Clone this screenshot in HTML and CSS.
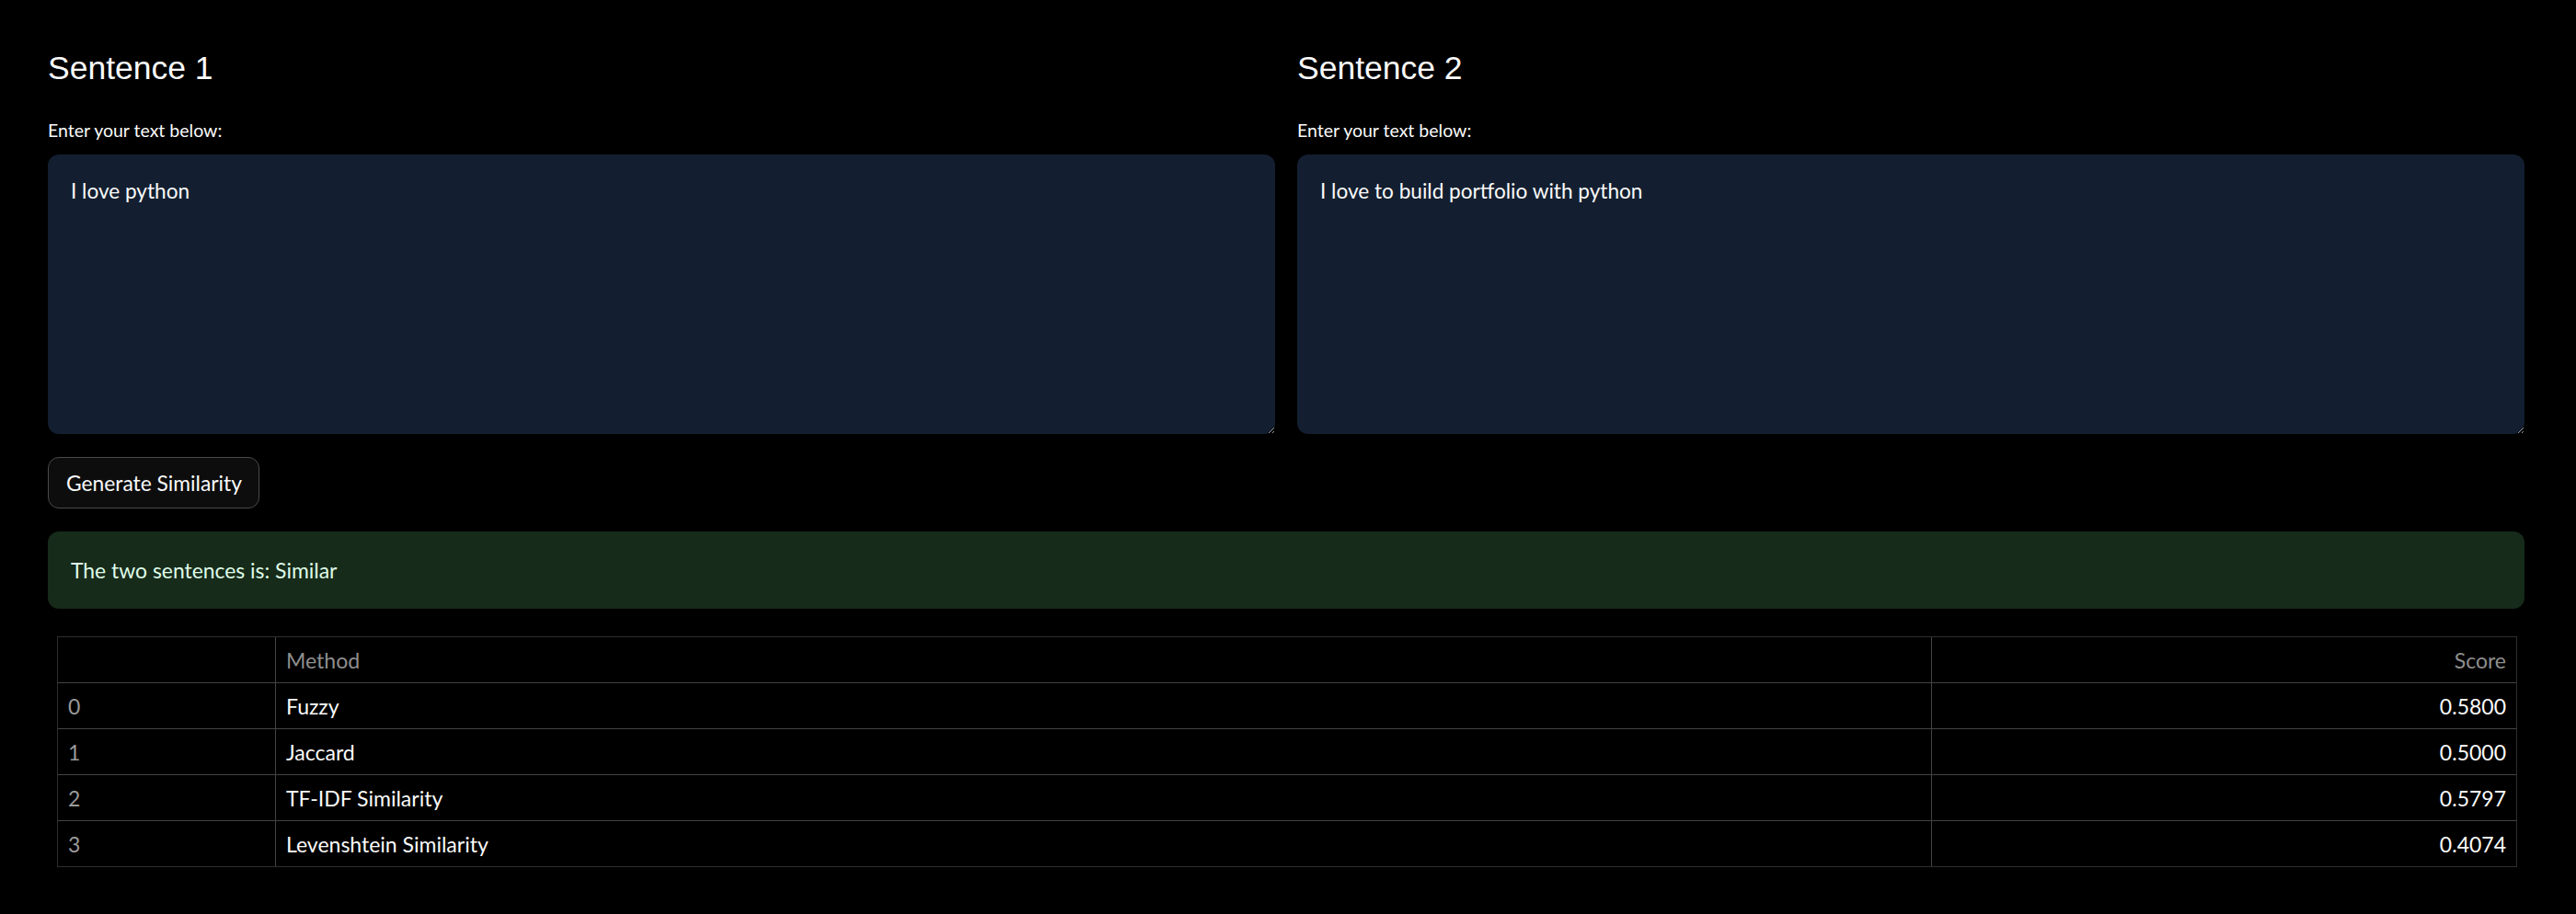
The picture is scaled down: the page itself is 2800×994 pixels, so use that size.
FILE: index.html
```html
<!DOCTYPE html>
<html lang="en">
<head>
<meta charset="utf-8">
<title>Sentence Similarity</title>
<link rel="stylesheet" href="styles.css">
</head>
<body>
<main class="main">
  <div class="columns">
    <section class="col">
      <h3 class="title">Sentence 1</h3>
      <label class="label" for="s1">Enter your text below:</label>
      <textarea id="s1" class="box">I love python</textarea>
    </section>
    <section class="col">
      <h3 class="title">Sentence 2</h3>
      <label class="label" for="s2">Enter your text below:</label>
      <textarea id="s2" class="box">I love to build portfolio with python</textarea>
    </section>
  </div>
  <button class="btn" type="button">Generate Similarity</button>
  <div class="alert">The two sentences is: Similar</div>
  <table class="grid">
    <thead>
      <tr><th class="idx"></th><th class="method">Method</th><th class="score">Score</th></tr>
    </thead>
    <tbody>
      <tr><td class="idx">0</td><td class="method">Fuzzy</td><td class="score">0.5800</td></tr>
      <tr><td class="idx">1</td><td class="method">Jaccard</td><td class="score">0.5000</td></tr>
      <tr><td class="idx">2</td><td class="method">TF-IDF Similarity</td><td class="score">0.5797</td></tr>
      <tr><td class="idx">3</td><td class="method">Levenshtein Similarity</td><td class="score">0.4074</td></tr>
    </tbody>
  </table>
</main>
</body>
</html>
```
FILE: styles.css
```css
body {
  margin: 0;
  background: #000;
  color: #fafafa;
  font-family: Lato, "Noto Sans", sans-serif;
}
.main {
  padding: 0 56px 0 52px;
}
.columns {
  display: grid;
  grid-template-columns: 1fr 1fr;
  gap: 24px;
}
.col {
  display: flex;
  flex-direction: column;
}
.title {
  margin: 53px 0 0;
  font-family: "Liberation Sans", Arial, sans-serif;
  font-weight: 400;
  font-size: 35.5px;
  line-height: 42px;
}
.label {
  display: block;
  margin: 34px 0 14px;
  font-size: 19.5px;
  line-height: 25px;
}
.box {
  box-sizing: border-box;
  height: 304px;
  width: 100%;
  margin: 0;
  padding: 22px 24px 0 25px;
  border: 0;
  border-radius: 12px;
  background: #131f30;
  color: #fafafa;
  font-family: Lato, sans-serif;
  font-size: 22.6px;
  line-height: 1.6;
  resize: vertical;
  outline: none;
}
.btn {
  display: flex;
  align-items: center;
  box-sizing: border-box;
  height: 56px;
  margin-top: 25px;
  padding: 0 18px 0 19px;
  border: 1px solid #4a4a4a;
  border-radius: 12px;
  background: #0d0d0d;
  color: #fafafa;
  font-family: Lato, sans-serif;
  font-size: 22.8px;
}
.alert {
  display: flex;
  align-items: center;
  box-sizing: border-box;
  height: 84px;
  margin-top: 25px;
  padding: 0 24px 0 25px;
  border-radius: 12px;
  background: #172b1a;
  color: #dffde9;
  font-size: 22.9px;
}
.grid {
  width: calc(100% - 18px);
  margin: 30px 8px 0 10px;
  border-collapse: separate;
  border-spacing: 0;
  border-top: 1px solid #2e2e2e;
  border-left: 1px solid #2e2e2e;
  font-size: 23px;
}
.grid th,
.grid td {
  box-sizing: border-box;
  height: 50px;
  padding: 0 11px;
  border-right: 1px solid #434343;
  border-bottom: 1px solid #434343;
  text-align: left;
  font-weight: 400;
}
.grid th {
  color: #8e8e8e;
}
.grid tr > :last-child {
  border-right-color: #2e2e2e;
}
.grid tbody tr:last-child td {
  border-bottom-color: #2e2e2e;
}
.grid .idx {
  width: 237px;
  color: #9a9a9a;
}
.grid .method {
  width: 1800px;
  color: #fafafa;
}
.grid th.method {
  color: #8e8e8e;
}
.grid .score {
  text-align: right;
}
```
